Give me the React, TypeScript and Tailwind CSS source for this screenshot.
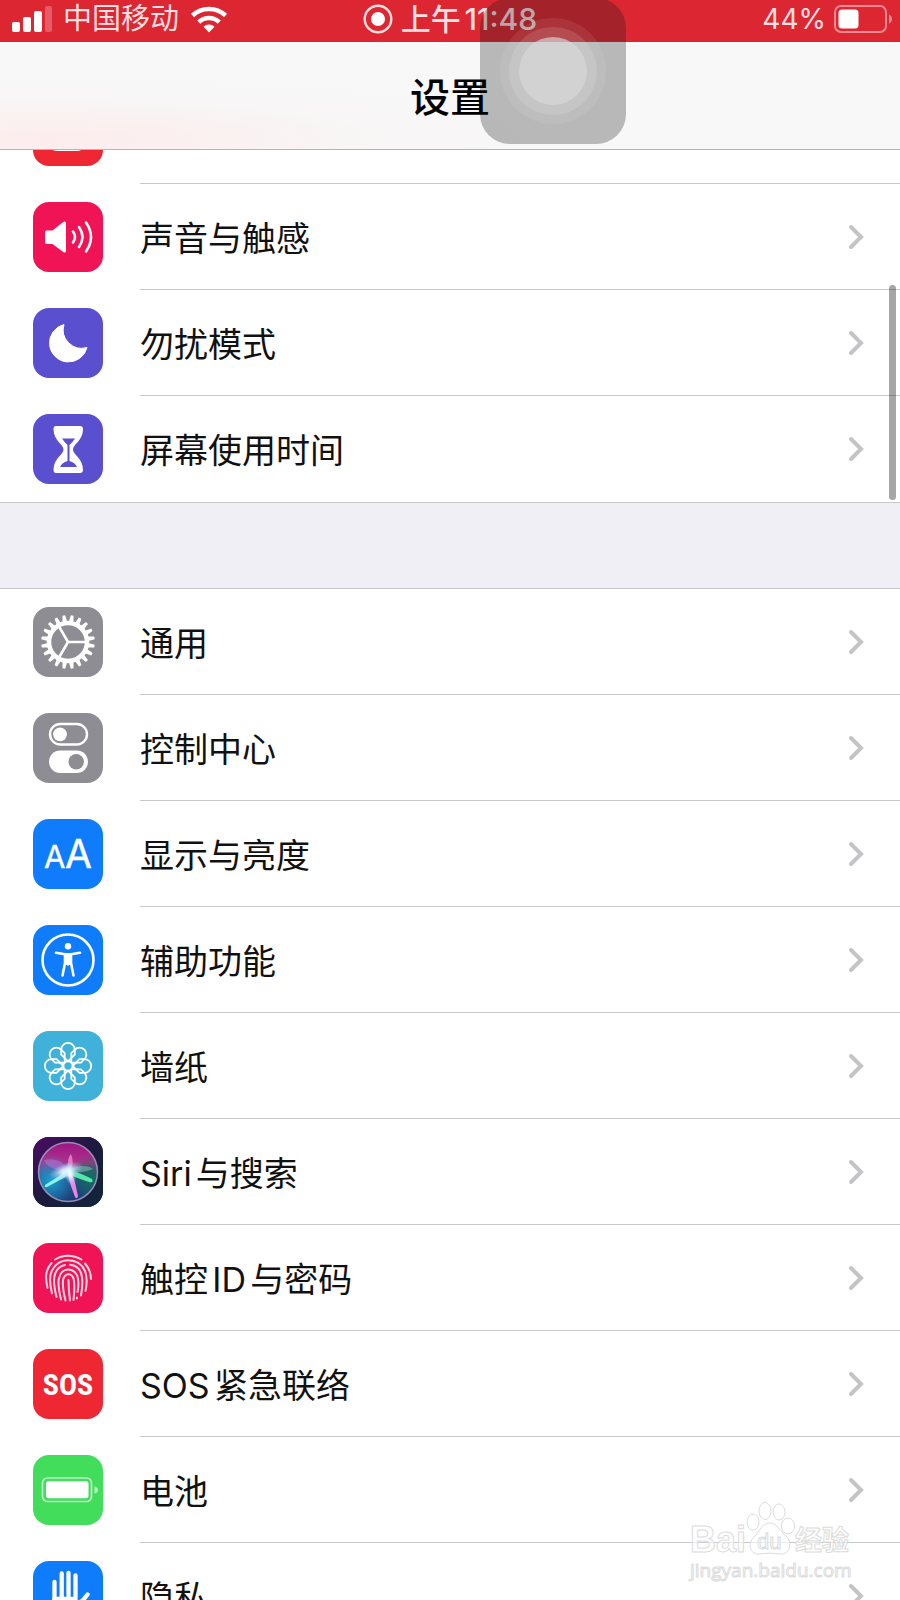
import type { ReactNode } from "react";

type SettingRow = { label: string; color: string; icon: ReactNode };

const GEAR_TEETH = Array.from({ length: 20 }, (_, i) => i * 18 + 9);
const PETALS = [0, 45, 90, 135, 180, 225, 270, 315];

function NotificationIcon() {
  return <rect x="15" y="15" width="38" height="40" rx="9" fill="#fff" />;
}

function SpeakerIcon() {
  return (
    <g fill="none" stroke="#fff" strokeLinecap="round" strokeLinejoin="round">
      <path d="M13.5 30H20L31.5 21V49L20 40.5H13.5Z" fill="#fff" strokeWidth="3" />
      <path d="M40 29.5Q44 35 40 40.5" strokeWidth="2.6" />
      <path d="M46 25Q53 35 46 45" strokeWidth="2.6" />
      <path d="M53 20.5Q63 35 53 49.5" strokeWidth="2.6" />
    </g>
  );
}

function MoonIcon() {
  return (
    <path
      d="M31 16.5A19 19 0 1 0 54 39.5A18.5 18.5 0 0 1 31 16.5Z"
      fill="#fff"
      stroke="#fff"
      strokeLinejoin="round"
    />
  );
}

function HourglassIcon() {
  return (
    <>
      <path
        d="M23 12H47Q50 12 50 15C50 27 40 30 40 35.5C40 41 50 44 50 56Q50 59 47 59H23Q20.5 59 20.5 56C20.5 44 30.5 41 30.5 35.5C30.5 30 20.5 27 20.5 15Q20.5 12 23 12Z"
        fill="#fff"
      />
      <path d="M29 24.5H42Q39 29 36.5 31V47Q42 48.5 44 53H27Q29 48.5 34.5 47V31Q32 29 29 24.5Z" fill="#5a4fcf" />
    </>
  );
}

function GearIcon() {
  return (
    <g stroke="#fff" fill="none">
      <circle cx="35" cy="35" r="19" strokeWidth="4.5" />
      {GEAR_TEETH.map((angle) => (
        <path key={angle} d="M32.6 15.5L33.6 8.2H36.4L37.4 15.5Z" fill="#fff" stroke="none" transform={`rotate(${angle} 35 35)`} />
      ))}
      <path d="M35 35H53M35 35L26 19.5M35 35L26 50.5" strokeWidth="2.6" />
    </g>
  );
}

function TogglesIcon() {
  return (
    <>
      <rect x="17" y="11" width="37" height="20.5" rx="10.25" fill="none" stroke="#fff" strokeWidth="2.4" />
      <circle cx="27" cy="21.3" r="6.9" fill="#fff" />
      <rect x="16" y="37.5" width="39" height="22.5" rx="11.25" fill="#fff" />
      <circle cx="43.2" cy="48.7" r="7.7" fill="#8e8d93" />
    </>
  );
}

function TextSizeIcon() {
  return (
    <g fill="#fff" stroke="#fff" strokeWidth="0.4" fontFamily="Inter, sans-serif">
      <text x="11" y="49" fontSize="31">A</text>
      <text x="32" y="49" fontSize="39">A</text>
    </g>
  );
}

function AccessibilityIcon() {
  return (
    <g stroke="#fff" fill="#fff" strokeLinecap="round" strokeLinejoin="round">
      <circle cx="35" cy="35" r="25.5" fill="none" strokeWidth="2.6" />
      <circle cx="35" cy="21.3" r="3.2" stroke="none" />
      <path d="M23 27.7L32 29.3V38L29.5 50.5M47 27.7L38 29.3V38L40.5 50.5" fill="none" strokeWidth="2.6" />
      <path d="M32 28.5H38V38L36 40H34L32 38Z" strokeWidth="1" />
    </g>
  );
}

function FlowerIcon() {
  return (
    <g fill="none" stroke="#fff" strokeWidth="1.8" strokeLinejoin="round">
      <circle cx="35" cy="35" r="4.6" />
      {PETALS.map((angle) => (
        <path
          key={angle}
          d="M35 30.4L28.2 23.5V18.6A6.8 6.8 0 1 1 41.8 18.6V23.5Z"
          transform={`rotate(${angle} 35 35)`}
        />
      ))}
    </g>
  );
}

function SiriIcon() {
  return (
    <>
      <defs>
        <linearGradient id="siri-bg" x1="0" y1="0" x2="1" y2="1">
          <stop offset="0" stopColor="#4d0a66" />
          <stop offset="0.5" stopColor="#1b1b3d" />
          <stop offset="1" stopColor="#12263a" />
        </linearGradient>
        <linearGradient id="siri-orb" x1="0.5" y1="0" x2="0.5" y2="1">
          <stop offset="0" stopColor="#9a1684" />
          <stop offset="0.35" stopColor="#b0318a" />
          <stop offset="0.6" stopColor="#24487e" />
          <stop offset="1" stopColor="#1b3c78" />
        </linearGradient>
        <radialGradient id="siri-teal" cx="0.2" cy="0.65" r="0.45">
          <stop offset="0" stopColor="#1a9fd0" />
          <stop offset="1" stopColor="#1a9fd0" stopOpacity="0" />
        </radialGradient>
        <radialGradient id="siri-green" cx="0.9" cy="0.6" r="0.4">
          <stop offset="0" stopColor="#12705f" />
          <stop offset="1" stopColor="#12705f" stopOpacity="0" />
        </radialGradient>
        <radialGradient id="siri-glow">
          <stop offset="0" stopColor="#fff" />
          <stop offset="0.3" stopColor="#e6f7ff" stopOpacity="0.85" />
          <stop offset="1" stopColor="#a8c8ff" stopOpacity="0" />
        </radialGradient>
      </defs>
      <rect width="70" height="70" fill="url(#siri-bg)" />
      <circle cx="35" cy="35" r="29.5" fill="url(#siri-orb)" />
      <circle cx="35" cy="35" r="29.5" fill="url(#siri-teal)" />
      <circle cx="35" cy="35" r="29.5" fill="url(#siri-green)" />
      <path d="M11 23C22 20 32 25 36 34C26 34 15 32 11 23Z" fill="#c77be0" opacity="0.45" />
      <path d="M35 33Q34 21 38 17Q42 26 37 34Z" fill="#f59ae0" opacity="0.7" />
      <path d="M36 32Q52 26 60 32Q50 36 36 36Z" fill="#5fae9f" opacity="0.75" />
      <path d="M33 32Q48 36 59 42Q61 46 56 45Q43 41 33 36Z" fill="#54e8a8" />
      <path d="M37 32L12 48Q11 51 14 50L38 37Z" fill="#8af4f0" />
      <path d="M34 34Q37 48 42 60Q44 63 45 59Q43 46 38 34Z" fill="#ea85e6" />
      <ellipse cx="33" cy="34" rx="18" ry="8" fill="url(#siri-glow)" transform="rotate(-18 33 34)" />
      <ellipse cx="37" cy="37" rx="6" ry="12" fill="url(#siri-glow)" transform="rotate(-14 37 37)" />
      <circle cx="35" cy="35" r="29.5" fill="none" stroke="#a99cc4" strokeWidth="1.5" opacity="0.85" />
    </>
  );
}

function FingerprintIcon() {
  return (
    <g fill="none" stroke="#ffd5e2" strokeWidth="2" strokeLinecap="round">
      <path d="M22 16.5C30 11.5 40 11.5 48.5 16.5" />
      <path d="M18.5 20C12.5 27 12 34 14.5 45" />
      <path d="M52 20.5C56 25 58 30 58 36" />
      <path d="M19 50.5C16.5 40 16 33 19 27.5C23 20 29 17.2 35 17.2C43 17.2 49 21 52 28C54 33 54 41 52.5 48" />
      <path d="M23.5 54C21 44 20.5 38 21.5 33C23 26.5 27 23 32 22" />
      <path d="M37 21.8C44 22.5 48 27 49 34C50 41 49 47 48 52.5" />
      <path d="M28 56.5C25.5 46 25 40 25.8 36C27 29.5 31 26.5 35 26.5C41 26.5 44.5 31 45 36C46 43 45 47 44.5 49" />
      <path d="M32.5 57.5C30 48 29.5 42 30 37C31 33 33 31.2 35.5 31.2C39 31.2 40.5 34 41 38C41.7 44 41.2 51 40.5 57" />
      <path d="M37 57.5C36 50 35.5 44 35.5 37" />
      <path d="M44 54.5L43.8 55.5" />
    </g>
  );
}

function SosIcon() {
  return (
    <text
      x="35"
      y="46"
      fontSize="30"
      fontWeight="700"
      textAnchor="middle"
      fill="#fff"
      fontFamily="'Liberation Sans Narrow', 'Roboto Condensed', 'Open Sans Condensed', 'Noto Sans CJK SC', sans-serif"
    >
      SOS
    </text>
  );
}

function BatteryIcon() {
  return (
    <>
      <rect x="9.5" y="23" width="49" height="23.5" rx="5" fill="none" stroke="#b9f3c3" strokeWidth="1.7" />
      <rect x="13" y="26.3" width="42.5" height="17" rx="2.5" fill="#fff" />
      <path d="M61.5 31.5Q65 32.5 65 35Q65 37.5 61.5 38.5Z" fill="#b9f3c3" />
    </>
  );
}

function HandIcon() {
  return (
    <g fill="none" stroke="#fff" strokeWidth="4.3" strokeLinecap="round">
      <path d="M21.5 21V40M28.7 12.5V36M35.5 12V36M42.5 14.5V36M54.5 33.5L47 43" />
      <path d="M21.5 38H42.5V43L49 40Q43 57 35 57Q24 57 21.5 44Z" fill="#fff" strokeLinejoin="round" />
    </g>
  );
}

const SOUND_ROWS: SettingRow[] = [
  { label: "通知", color: "bg-[#ee2733]", icon: <NotificationIcon /> },
  { label: "声音与触感", color: "bg-[#f01457]", icon: <SpeakerIcon /> },
  { label: "勿扰模式", color: "bg-[#5a4fcf]", icon: <MoonIcon /> },
  { label: "屏幕使用时间", color: "bg-[#5a4fcf]", icon: <HourglassIcon /> },
];

const GENERAL_ROWS: SettingRow[] = [
  { label: "通用", color: "bg-[#8e8d93]", icon: <GearIcon /> },
  { label: "控制中心", color: "bg-[#8e8d93]", icon: <TogglesIcon /> },
  { label: "显示与亮度", color: "bg-[#0f7dfb]", icon: <TextSizeIcon /> },
  { label: "辅助功能", color: "bg-[#0f7dfb]", icon: <AccessibilityIcon /> },
  { label: "墙纸", color: "bg-[#40b1d8]", icon: <FlowerIcon /> },
  { label: "Siri与搜索", color: "bg-[#1b1b3d]", icon: <SiriIcon /> },
  { label: "触控ID与密码", color: "bg-[#f01457]", icon: <FingerprintIcon /> },
  { label: "SOS紧急联络", color: "bg-[#ee2733]", icon: <SosIcon /> },
  { label: "电池", color: "bg-[#43dd5c]", icon: <BatteryIcon /> },
  { label: "隐私", color: "bg-[#0f7dfb]", icon: <HandIcon /> },
];

function Row({ label, color, icon, last }: SettingRow & { last: boolean }) {
  return (
    <li>
      <a href="#" className="flex h-[106px] items-center pl-[33px]">
        <span className={`size-[70px] shrink-0 overflow-hidden rounded-2xl ${color}`}>
          <svg viewBox="0 0 70 70" className="size-full" aria-hidden="true">
            {icon}
          </svg>
        </span>
        <span
          className={`ml-[37px] flex h-full flex-1 items-center justify-between pr-9 ${
            last ? "" : "border-b border-[#c9c9cb]"
          }`}
        >
          <span className="pt-1 text-[34px] leading-[48px] text-[#111] [text-autospace:normal]">{label}</span>
          <svg viewBox="0 0 16 26" className="h-[26px] w-4" fill="none" stroke="#c4c4c6" strokeWidth="4" strokeLinecap="round" aria-hidden="true">
            <path d="M3 3L13 13L3 23" />
          </svg>
        </span>
      </a>
    </li>
  );
}

function RowGroup({ rows }: { rows: SettingRow[] }) {
  return (
    <ul className="bg-white">
      {rows.map((row, i) => (
        <Row key={row.label} {...row} last={i === rows.length - 1} />
      ))}
    </ul>
  );
}

function StatusBar() {
  return (
    <div className="grid h-[42px] grid-cols-3 items-center bg-[#dc2631] px-3 pb-1 text-[29px] leading-[36px] text-[#ffdfe0]">
      <div className="flex items-center gap-[11px]">
        <svg viewBox="0 0 40 26" className="h-[26px] w-10" fill="#fff" aria-hidden="true">
          <rect x="0" y="16" width="8" height="10" rx="2" />
          <rect x="11" y="11" width="8" height="15" rx="2" />
          <rect x="22" y="5" width="8" height="21" rx="2" />
          <rect x="33" y="0" width="7" height="26" rx="2" opacity="0.25" />
        </svg>
        <span>中国移动</span>
        <svg viewBox="0 0 38 28" className="h-7 w-[38px]" aria-hidden="true">
          <g fill="none" stroke="#fff" strokeWidth="4.5">
            <path d="M2.5 10.5A24 24 0 0 1 35.5 10.5" />
            <path d="M8.7 17.2A15 15 0 0 1 29.3 17.2" />
          </g>
          <path d="M19 27.5L13.5 21.8A8 8 0 0 1 24.5 21.8Z" fill="#fff" />
        </svg>
      </div>
      <div className="flex items-center justify-center gap-2">
        <svg viewBox="0 0 30 30" className="size-[30px]" aria-hidden="true">
          <circle cx="15" cy="15" r="13.3" fill="none" stroke="#ffdfe0" strokeWidth="2.4" />
          <circle cx="15" cy="15" r="7" fill="#fff" />
        </svg>
        <span className="text-[30px] font-medium [text-autospace:normal]">上午11:48</span>
      </div>
      <div className="flex items-center justify-end gap-2">
        <span className="text-[28px]">44%</span>
        <svg viewBox="0 0 58 28" className="-mr-1 h-7 w-[58px]" aria-hidden="true">
          <rect x="1" y="1" width="51" height="26" rx="6" fill="none" stroke="#f08a90" strokeWidth="2" />
          <rect x="4.5" y="4.5" width="20" height="19" rx="3.5" fill="#fff" />
          <path d="M55 9.5Q58 11 58 14Q58 17 55 18.5Z" fill="#f08a90" />
        </svg>
      </div>
    </div>
  );
}

function AssistiveTouch() {
  return (
    <button
      type="button"
      aria-label="AssistiveTouch"
      className="absolute -top-0.5 left-[480px] flex size-[146px] items-center justify-center rounded-[30px] bg-[rgb(28_26_28/0.29)]"
    >
      <span className="flex size-[106px] items-center justify-center rounded-full bg-white/8">
        <span className="flex size-[88px] items-center justify-center rounded-full bg-white/12">
          <span className="size-[68px] rounded-full bg-[rgb(218_217_217/0.65)]" />
        </span>
      </span>
    </button>
  );
}

function Watermark() {
  return (
    <div className="pointer-events-none absolute right-12 bottom-4 flex w-[162px] flex-col text-white/60 [-webkit-text-stroke:1px_#dcdcdc]">
      <svg viewBox="0 0 162 54" className="h-[54px] w-full overflow-visible" fill="#fff" fillOpacity="0.6" stroke="#dcdcdc" aria-hidden="true">
        <text x="0" y="50" fontSize="36" fontWeight="700" fontFamily="'Liberation Sans', sans-serif">Bai</text>
        <ellipse cx="63" cy="20" rx="6" ry="8" />
        <ellipse cx="75" cy="9" rx="6" ry="8.5" />
        <ellipse cx="89" cy="10" rx="6" ry="8" />
        <ellipse cx="98" cy="24" rx="6.5" ry="8" />
        <path d="M80 21C87 21 90 29 96 34C103 41 100 53 90 52C83 51 77 51 70 52C60 53 57 42 64 35C70 29 72 21 80 21Z" />
        <text x="67" y="47" fontSize="22" fontFamily="'Liberation Sans', sans-serif">du</text>
        <text x="105" y="48" fontSize="27" fontWeight="700" fontFamily="'Noto Sans CJK SC', sans-serif">经验</text>
      </svg>
      <span className="font-['Open_Sans','Noto_Sans',sans-serif] text-[19px] leading-[28px]">jingyan.baidu.com</span>
    </div>
  );
}

export default function App() {
  return (
    <div className="relative flex h-screen flex-col overflow-hidden bg-white font-['Inter','Noto_Sans_CJK_SC',sans-serif]">
      <StatusBar />
      <header className="flex h-[108px] shrink-0 items-center justify-center border-b border-[#b5b5b7] bg-[radial-gradient(ellipse_at_5%_90%,#fdecec_0%,#f8f6f6_28%,#f8f8f8_45%)]">
        <h1 className="relative z-10 pt-1 text-[40px] leading-[56px] font-medium text-black">设置</h1>
      </header>
      <main className="min-h-0 flex-1 overflow-hidden">
        {/* list is scrolled part of the way down, so the first row sits under the header */}
        <div className="-mt-[72px]">
          <RowGroup rows={SOUND_ROWS} />
          <div className="h-[87px] border-y border-[#c9c9cb] bg-[#f0eff6]" />
          <RowGroup rows={GENERAL_ROWS} />
        </div>
      </main>
      <AssistiveTouch />
      <div className="absolute top-[285px] right-1 h-[215px] w-[7px] rounded-full bg-black/35" />
      <Watermark />
    </div>
  );
}
